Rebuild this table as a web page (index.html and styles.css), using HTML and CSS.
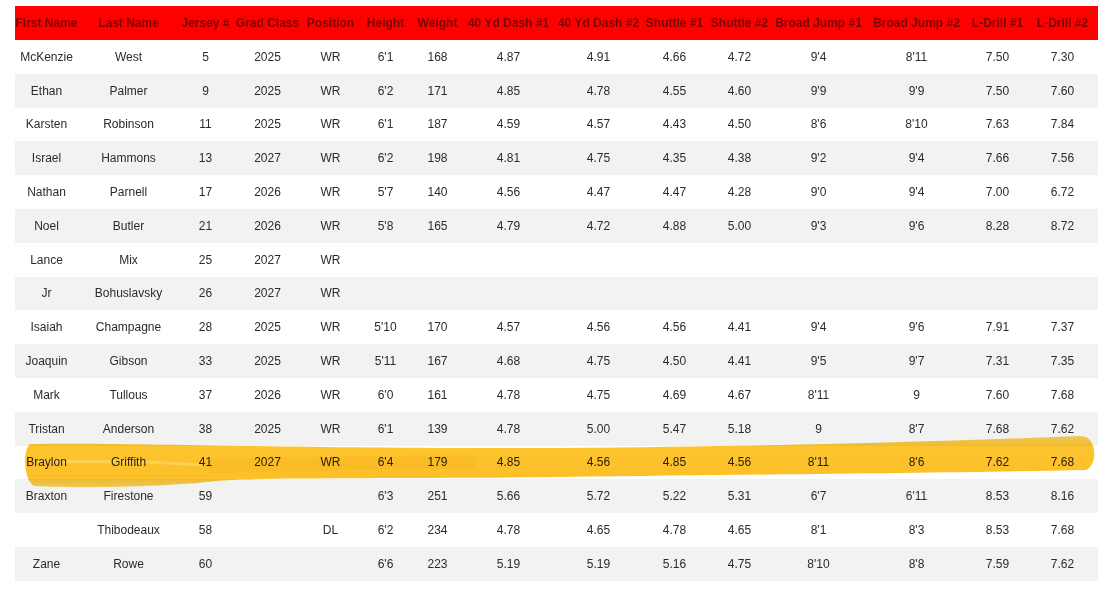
FILE: index.html
```html
<!DOCTYPE html>
<html lang="en">
<head>
<meta charset="utf-8">
<title>Combine Results</title>
<link rel="stylesheet" href="styles.css">
</head>
<body>
<div class="page">
  <table class="results">
    <colgroup>
      <col class="c1"><col class="c2"><col class="c3"><col class="c4"><col class="c5">
      <col class="c6"><col class="c7"><col class="c8"><col class="c9"><col class="c10">
      <col class="c11"><col class="c12"><col class="c13"><col class="c14"><col class="c15">
    </colgroup>
    <thead>
      <tr>
        <th>First Name</th><th>Last Name</th><th>Jersey #</th><th>Grad Class</th><th>Position</th>
        <th>Height</th><th>Weight</th><th>40 Yd Dash #1</th><th>40 Yd Dash #2</th><th>Shuttle #1</th>
        <th>Shuttle #2</th><th>Broad Jump #1</th><th>Broad Jump #2</th><th>L-Drill #1</th><th>L-Drill #2</th>
      </tr>
    </thead>
    <tbody>
      <tr><td>McKenzie</td><td>West</td><td>5</td><td>2025</td><td>WR</td><td>6'1</td><td>168</td><td>4.87</td><td>4.91</td><td>4.66</td><td>4.72</td><td>9'4</td><td>8'11</td><td>7.50</td><td>7.30</td></tr>
      <tr><td>Ethan</td><td>Palmer</td><td>9</td><td>2025</td><td>WR</td><td>6'2</td><td>171</td><td>4.85</td><td>4.78</td><td>4.55</td><td>4.60</td><td>9'9</td><td>9'9</td><td>7.50</td><td>7.60</td></tr>
      <tr><td>Karsten</td><td>Robinson</td><td>11</td><td>2025</td><td>WR</td><td>6'1</td><td>187</td><td>4.59</td><td>4.57</td><td>4.43</td><td>4.50</td><td>8'6</td><td>8'10</td><td>7.63</td><td>7.84</td></tr>
      <tr><td>Israel</td><td>Hammons</td><td>13</td><td>2027</td><td>WR</td><td>6'2</td><td>198</td><td>4.81</td><td>4.75</td><td>4.35</td><td>4.38</td><td>9'2</td><td>9'4</td><td>7.66</td><td>7.56</td></tr>
      <tr><td>Nathan</td><td>Parnell</td><td>17</td><td>2026</td><td>WR</td><td>5'7</td><td>140</td><td>4.56</td><td>4.47</td><td>4.47</td><td>4.28</td><td>9'0</td><td>9'4</td><td>7.00</td><td>6.72</td></tr>
      <tr><td>Noel</td><td>Butler</td><td>21</td><td>2026</td><td>WR</td><td>5'8</td><td>165</td><td>4.79</td><td>4.72</td><td>4.88</td><td>5.00</td><td>9'3</td><td>9'6</td><td>8.28</td><td>8.72</td></tr>
      <tr><td>Lance</td><td>Mix</td><td>25</td><td>2027</td><td>WR</td><td></td><td></td><td></td><td></td><td></td><td></td><td></td><td></td><td></td><td></td></tr>
      <tr><td>Jr</td><td>Bohuslavsky</td><td>26</td><td>2027</td><td>WR</td><td></td><td></td><td></td><td></td><td></td><td></td><td></td><td></td><td></td><td></td></tr>
      <tr><td>Isaiah</td><td>Champagne</td><td>28</td><td>2025</td><td>WR</td><td>5'10</td><td>170</td><td>4.57</td><td>4.56</td><td>4.56</td><td>4.41</td><td>9'4</td><td>9'6</td><td>7.91</td><td>7.37</td></tr>
      <tr><td>Joaquin</td><td>Gibson</td><td>33</td><td>2025</td><td>WR</td><td>5'11</td><td>167</td><td>4.68</td><td>4.75</td><td>4.50</td><td>4.41</td><td>9'5</td><td>9'7</td><td>7.31</td><td>7.35</td></tr>
      <tr><td>Mark</td><td>Tullous</td><td>37</td><td>2026</td><td>WR</td><td>6'0</td><td>161</td><td>4.78</td><td>4.75</td><td>4.69</td><td>4.67</td><td>8'11</td><td>9</td><td>7.60</td><td>7.68</td></tr>
      <tr><td>Tristan</td><td>Anderson</td><td>38</td><td>2025</td><td>WR</td><td>6'1</td><td>139</td><td>4.78</td><td>5.00</td><td>5.47</td><td>5.18</td><td>9</td><td>8'7</td><td>7.68</td><td>7.62</td></tr>
      <tr><td>Braylon</td><td>Griffith</td><td>41</td><td>2027</td><td>WR</td><td>6'4</td><td>179</td><td>4.85</td><td>4.56</td><td>4.85</td><td>4.56</td><td>8'11</td><td>8'6</td><td>7.62</td><td>7.68</td></tr>
      <tr><td>Braxton</td><td>Firestone</td><td>59</td><td></td><td></td><td>6'3</td><td>251</td><td>5.66</td><td>5.72</td><td>5.22</td><td>5.31</td><td>6'7</td><td>6'11</td><td>8.53</td><td>8.16</td></tr>
      <tr><td></td><td>Thibodeaux</td><td>58</td><td></td><td>DL</td><td>6'2</td><td>234</td><td>4.78</td><td>4.65</td><td>4.78</td><td>4.65</td><td>8'1</td><td>8'3</td><td>8.53</td><td>7.68</td></tr>
      <tr><td>Zane</td><td>Rowe</td><td>60</td><td></td><td></td><td>6'6</td><td>223</td><td>5.19</td><td>5.19</td><td>5.16</td><td>4.75</td><td>8'10</td><td>8'8</td><td>7.59</td><td>7.62</td></tr>
    </tbody>
  </table>

  <svg class="marker" width="1114" height="611" viewBox="0 0 1114 611" aria-hidden="true">
    <defs>
      <linearGradient id="hl" x1="0" y1="0" x2="0" y2="1">
        <stop offset="0" stop-color="#fbd45c"/>
        <stop offset="0.2" stop-color="#fcc52f"/>
        <stop offset="0.8" stop-color="#fcbf28"/>
        <stop offset="1" stop-color="#fbd35a"/>
      </linearGradient>
    </defs>
    <path fill="url(#hl)" d="M 30 444 C 120 442, 300 449, 560 448 C 800 446, 950 441, 1080 436 C 1098 435, 1098 466, 1086 470 C 950 473, 800 474, 560 477 C 400 479, 260 477, 215 481 C 180 486, 80 489, 34 486 C 23 480, 23 449, 30 444 Z"/>
    <path fill="none" stroke="#fdd97a" stroke-width="3" stroke-linecap="round" opacity="0.6" d="M 40 462 C 100 461, 160 462, 200 465"/>
    <path fill="none" stroke="#f7b41c" stroke-width="14" stroke-linecap="round" opacity="0.35" d="M 215 466 C 300 464, 380 462, 470 462"/>
  </svg>
</div>
</body>
</html>
```

FILE: styles.css
```css
html, body {
  margin: 0;
  padding: 0;
  background: #ffffff;
}

.page {
  position: relative;
  width: 1114px;
  height: 611px;
  padding: 6px 0 0 15px;
  box-sizing: border-box;
  font-family: "Liberation Sans", Arial, sans-serif;
}

.results {
  width: 1083px;
  table-layout: fixed;
  border-collapse: collapse;
  border-spacing: 0;
}

.c1 { width: 63px; }
.c2 { width: 101px; }
.c3 { width: 53px; }
.c4 { width: 71px; }
.c5 { width: 55px; }
.c6 { width: 55px; }
.c7 { width: 49px; }
.c8 { width: 93px; }
.c9 { width: 87px; }
.c10 { width: 65px; }
.c11 { width: 65px; }
.c12 { width: 93px; }
.c13 { width: 103px; }
.c14 { width: 59px; }
.c15 { width: 71px; }

.results th {
  height: 34px;
  padding: 0;
  background: #ff0000;
  color: #7d0000;
  font-size: 12px;
  font-weight: bold;
  text-align: center;
  white-space: nowrap;
}

.results td {
  height: 33.8px;
  padding: 0;
  color: #2b2b2b;
  font-size: 12px;
  text-align: center;
  white-space: nowrap;
}

.results tbody tr:nth-child(even) td {
  background: #f2f2f2;
}

.marker {
  position: absolute;
  left: 0;
  top: 0;
  pointer-events: none;
  mix-blend-mode: multiply;
}
```
